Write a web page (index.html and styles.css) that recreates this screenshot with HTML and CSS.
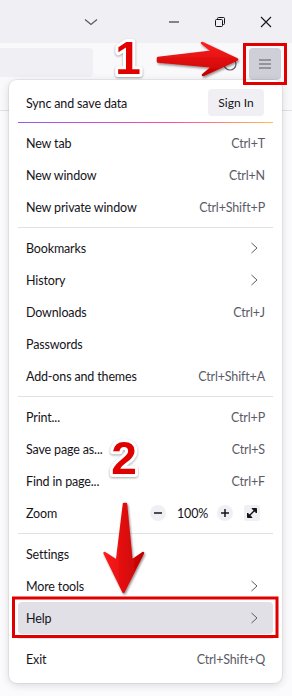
FILE: index.html
```html
<!DOCTYPE html>
<html lang="en">
<head>
<meta charset="UTF-8">
<meta name="viewport" content="width=device-width, initial-scale=1.0">
<title>Firefox menu - Help</title>
<link rel="stylesheet" href="styles.css">
</head>
<body>
<div class="window">
    <div class="titlebar">
        <span class="tab-list">
            <svg width="14" height="8" viewBox="0 0 14 8"><path d="M1 1.5 L7 6.5 L13 1.5" fill="none" stroke="#5b5b66" stroke-width="1.3"/></svg>
        </span>
        <span class="spacer"></span>
        <span class="win-btn">
            <svg width="12" height="12" viewBox="0 0 12 12"><path d="M1 6 H11" stroke="#15141a" stroke-width="1"/></svg>
        </span>
        <span class="win-btn">
            <svg width="12" height="12" viewBox="0 0 12 12"><rect x="1.5" y="3.5" width="7" height="7" rx="1" fill="none" stroke="#15141a"/><path d="M3.5 3.5 V2.5 a1 1 0 0 1 1 -1 H9.5 a1 1 0 0 1 1 1 V7.5 a1 1 0 0 1 -1 1 H8.5" fill="none" stroke="#15141a"/></svg>
        </span>
        <span class="win-btn">
            <svg width="12" height="12" viewBox="0 0 12 12"><path d="M1 1 L11 11 M11 1 L1 11" stroke="#15141a" stroke-width="1.1"/></svg>
        </span>
    </div>

    <div class="toolbar">
        <div class="urlbar"></div>
        <span class="spacer"></span>
        <span class="account">
            <svg width="14" height="14" viewBox="0 0 14 14"><circle cx="7" cy="7" r="6" fill="none" stroke="#5b5b66" stroke-width="1.2"/></svg>
        </span>
        <button class="menu-btn">
            <svg width="12" height="10" viewBox="0 0 12 10"><path d="M0 1 H12 M0 5 H12 M0 9 H12" stroke="#5b5b66" stroke-width="1.2"/></svg>
        </button>
    </div>

    <div class="content"></div>

    <div class="panel">
        <div class="sync-row">
            <span>Sync and save data</span>
            <button class="sign-in">Sign In</button>
        </div>
        <div class="sync-line"></div>

        <div class="item"><span>New tab</span><span class="key">Ctrl+T</span></div>
        <div class="item"><span>New window</span><span class="key">Ctrl+N</span></div>
        <div class="item"><span>New private window</span><span class="key">Ctrl+Shift+P</span></div>
        <div class="sep"></div>

        <div class="item"><span>Bookmarks</span><svg class="chev" width="16" height="16" viewBox="0 0 16 16"><path d="M4.5 3 L10 8 L4.5 13" fill="none" stroke="#5b5b66"/></svg></div>
        <div class="item"><span>History</span><svg class="chev" width="16" height="16" viewBox="0 0 16 16"><path d="M4.5 3 L10 8 L4.5 13" fill="none" stroke="#5b5b66"/></svg></div>
        <div class="item"><span>Downloads</span><span class="key">Ctrl+J</span></div>
        <div class="item"><span>Passwords</span></div>
        <div class="item"><span>Add-ons and themes</span><span class="key">Ctrl+Shift+A</span></div>
        <div class="sep"></div>

        <div class="item"><span>Print...</span><span class="key">Ctrl+P</span></div>
        <div class="item"><span>Save page as...</span><span class="key">Ctrl+S</span></div>
        <div class="item"><span>Find in page...</span><span class="key">Ctrl+F</span></div>
        <div class="item zoom-row">
            <span>Zoom</span>
            <span class="zoom-ctrl">
                <span class="round-btn"><svg width="10" height="10" viewBox="0 0 10 10"><path d="M1 5 H9" stroke="#15141a" stroke-width="1.5"/></svg></span>
                <span class="zoom-val">100%</span>
                <span class="round-btn"><svg width="10" height="10" viewBox="0 0 10 10"><path d="M1 5 H9 M5 1 V9" stroke="#15141a" stroke-width="1.5"/></svg></span>
                <span class="full-btn"><svg width="12" height="12" viewBox="0 0 12 12"><path d="M2 10 L10 2" stroke="#15141a" stroke-width="1.5"/><path d="M6 1.5 H10.5 V6 Z" fill="#15141a" stroke="#15141a" stroke-width="1" stroke-linejoin="round"/><path d="M1.5 6 V10.5 H6 Z" fill="#15141a" stroke="#15141a" stroke-width="1" stroke-linejoin="round"/></svg></span>
            </span>
        </div>
        <div class="sep"></div>

        <div class="item"><span>Settings</span></div>
        <div class="item"><span>More tools</span><svg class="chev" width="16" height="16" viewBox="0 0 16 16"><path d="M4.5 3 L10 8 L4.5 13" fill="none" stroke="#5b5b66"/></svg></div>
        <div class="item active"><span>Help</span><svg class="chev" width="16" height="16" viewBox="0 0 16 16"><path d="M4.5 3 L10 8 L4.5 13" fill="none" stroke="#5b5b66"/></svg></div>
        <div class="sep"></div>
        <div class="item"><span>Exit</span><span class="key">Ctrl+Shift+Q</span></div>
    </div>

    <!-- tutorial markers drawn over the screenshot -->
    <svg class="annot" width="292" height="696" viewBox="0 0 292 696">
        <defs>
            <linearGradient id="redV" x1="0" y1="0" x2="0" y2="1">
                <stop offset="0" stop-color="#ff2020"/>
                <stop offset="1" stop-color="#c40000"/>
            </linearGradient>
            <linearGradient id="redH" x1="0" y1="0" x2="1" y2="0">
                <stop offset="0" stop-color="#ff1c1c"/>
                <stop offset="1" stop-color="#c00000"/>
            </linearGradient>
            <filter id="shadow" x="-20%" y="-20%" width="140%" height="140%">
                <feDropShadow dx="1" dy="1.5" stdDeviation="1.2" flood-color="#000" flood-opacity="0.45"/>
            </filter>
        </defs>

        <rect x="244.5" y="44.5" width="41" height="39" fill="none" stroke="#e00000" stroke-width="3"/>
        <rect x="13.5" y="598" width="263.5" height="38.5" fill="none" stroke="#e00000" stroke-width="3"/>

        <path d="M158 58 L213 51.5 L202 43 L237 59.5 L203 75 L213 66.5 L158 61.5 Z" fill="url(#redV)" stroke="url(#redV)" stroke-width="2.5" stroke-linejoin="round" filter="url(#shadow)"/>
        <path d="M124 504 L126 504 L131.5 561 L143 553 L123.5 592 L104.5 553 L117 561 Z" fill="url(#redH)" stroke="url(#redH)" stroke-width="2.5" stroke-linejoin="round" filter="url(#shadow)"/>

        <text class="num" x="128" y="74">1</text>
        <text class="num" x="124" y="474">2</text>
    </svg>
</div>
</body>
</html>
```

FILE: styles.css
```css
body {
    margin: 0;
    padding: 0;
    font-family: Lato, "Noto Sans", sans-serif;
    color: #15141a;
}

.window {
    position: relative;
    width: 292px;
    height: 696px;
    overflow: hidden;
    background-color: #fbfbfd;
}

.spacer {
    flex: 1;
}

.titlebar {
    display: flex;
    align-items: center;
    height: 43px;
    padding-right: 3px;
    background-color: #f0f0f4;
}

.tab-list {
    display: flex;
    justify-content: center;
    align-items: center;
    width: 28px;
    height: 28px;
    margin-left: 77px;
    margin-top: 1px;
}

.win-btn {
    display: flex;
    justify-content: center;
    align-items: center;
    width: 46px;
    height: 43px;
}

.toolbar {
    display: flex;
    align-items: flex-start;
    height: 68px;
    padding-top: 5px;
    padding-right: 11px;
    box-sizing: border-box;
    border-bottom: 1px solid #e0e0e6;
    background-color: #f9f9fb;
}

.urlbar {
    width: 93px;
    height: 29px;
    border-radius: 0 4px 4px 0;
    background-color: #f0f0f4;
}

.account {
    display: flex;
    justify-content: center;
    align-items: center;
    width: 20px;
    height: 32px;
    margin-right: 9px;
}

.menu-btn {
    display: flex;
    justify-content: center;
    align-items: center;
    width: 32px;
    height: 32px;
    border: none;
    border-radius: 4px;
    background-color: #cfcfd8;
    padding: 0;
}

.content {
    height: 584px;
    background-color: #fbfbfd;
}

/* app menu popup */
.panel {
    position: absolute;
    left: 9px;
    top: 80px;
    width: 273px;
    padding: 8px 9px;
    box-sizing: border-box;
    border-radius: 8px;
    background-color: #fff;
    box-shadow: 0 0 0 1px rgba(0, 0, 0, 0.05), 0 2px 8px rgba(0, 0, 0, 0.14);
    font-size: 12.5px;
    letter-spacing: -0.15px;
}

.sync-row {
    display: flex;
    justify-content: space-between;
    align-items: center;
    height: 30px;
    padding: 0 9px 0 8px;
}

.sign-in {
    width: 56px;
    height: 27px;
    margin-top: -1px;
    border: none;
    border-radius: 4px;
    background-color: #f0f0f4;
    color: #15141a;
    font-family: inherit;
    font-size: 12px;
    padding: 0;
}

.sync-line {
    height: 1px;
    margin: 4px 0;
    background: linear-gradient(90deg, #9059ff, #ff4aa2 60%, #ffbd4f);
}

.item {
    display: flex;
    justify-content: space-between;
    align-items: center;
    height: 32px;
    padding: 0 8px;
    border-radius: 4px;
}

.item.active {
    background-color: #e0e0e6;
}

.key {
    color: #5b5b66;
}

.chev {
    margin-right: 2px;
}

.sep {
    height: 1px;
    margin: 4px 0;
    background-color: #e0e0e6;
}

.zoom-row {
    padding-right: 13px;
}

.zoom-ctrl {
    display: flex;
    align-items: center;
    gap: 11px;
}

.round-btn {
    display: flex;
    justify-content: center;
    align-items: center;
    width: 16px;
    height: 16px;
    border-radius: 50%;
    background-color: #f0f0f4;
}

.zoom-val {
    width: 29px;
    text-align: center;
}

.full-btn {
    display: flex;
    justify-content: center;
    align-items: center;
    width: 16px;
    height: 16px;
    border-radius: 2px;
    background-color: #f0f0f4;
}

.annot {
    position: absolute;
    left: 0;
    top: 0;
    pointer-events: none;
}

.num {
    font-family: "Liberation Sans", Arial, sans-serif;
    font-weight: bold;
    font-size: 46px;
    letter-spacing: 0;
    text-anchor: middle;
    fill: #e00000;
    stroke: #fff;
    stroke-width: 6px;
    stroke-linejoin: round;
    paint-order: stroke;
    filter: drop-shadow(0 1px 1px rgba(0, 0, 0, 0.35));
}
```
